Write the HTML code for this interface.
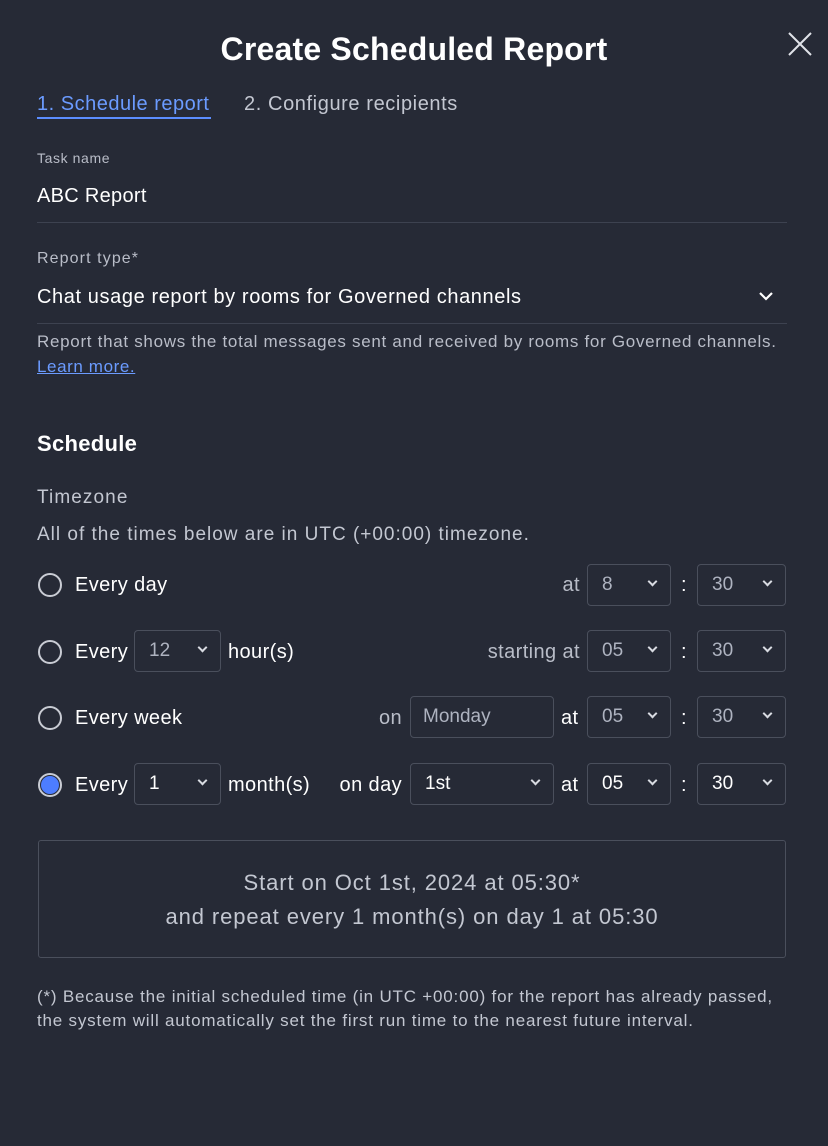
<!DOCTYPE html>
<html><head><style>
body{margin:0;width:828px;height:1146px;background:#262a36;font-family:"Liberation Sans",sans-serif;color:#fff;position:relative;overflow:hidden}
.a{position:absolute;white-space:nowrap}
.box{position:absolute;border:1px solid #4a4f5c;border-radius:4px;box-sizing:border-box;height:42px;font-size:19px;line-height:40px;padding-left:14px;color:#fff}
.box.dim{color:#aeb3c0}
.chev{position:absolute;right:14px;top:13px;border-right:2px solid #d8dbe2;border-bottom:2px solid #d8dbe2;transform:rotate(45deg);width:5px;height:5px}
.radio{position:absolute;width:24px;height:24px;border:2px solid #c9ccd4;border-radius:50%;box-sizing:border-box}
.lbl{font-size:20px;color:#fff;letter-spacing:0.4px}
.g{color:#b9bdc8}
.r{text-align:right}
</style></head><body>
<div class="a" style="left:0;width:828px;text-align:center;top:31px;font-size:32px;font-weight:bold;letter-spacing:0.2px">Create Scheduled Report</div>
<svg class="a" style="left:787px;top:31px" width="26" height="26"><path d="M2 2L24 24M24 2L2 24" stroke="#e0e2e8" stroke-width="2"/></svg>
<div class="a" style="left:37px;top:93px;font-size:20px;color:#6b9bff;letter-spacing:0.5px">1. Schedule report</div>
<div class="a" style="left:37px;top:117px;width:174px;height:2px;background:#5b8dff"></div>
<div class="a" style="left:244px;top:93px;font-size:20px;color:#c3c7d1;letter-spacing:0.6px">2. Configure recipients</div>
<div class="a" style="left:37px;top:150px;font-size:14px;color:#b9bdc8;letter-spacing:0.6px">Task name</div>
<div class="a" style="left:37px;top:185px;font-size:20px;letter-spacing:0.3px">ABC Report</div>
<div class="a" style="left:37px;top:222px;width:750px;height:1px;background:#3d4250"></div>
<div class="a" style="left:37px;top:250px;font-size:16px;color:#b9bdc8;letter-spacing:1.1px">Report type*</div>
<div class="a" style="left:37px;top:286px;font-size:20px;letter-spacing:0.6px">Chat usage report by rooms for Governed channels</div>
<svg class="a" style="left:757px;top:290px" width="18" height="12"><path d="M3 3L9 9L15 3" stroke="#fff" stroke-width="2.2" fill="none"/></svg>
<div class="a" style="left:37px;top:323px;width:750px;height:1px;background:#3d4250"></div>
<div class="a" style="left:37px;top:332px;font-size:17px;color:#b9bdc8;letter-spacing:0.7px">Report that shows the total messages sent and received by rooms for Governed channels.</div>
<div class="a" style="left:37px;top:357px;font-size:17px;color:#6b9bff;text-decoration:underline;letter-spacing:0.6px">Learn more.</div>
<div class="a" style="left:37px;top:431px;font-size:22px;font-weight:bold;letter-spacing:0.3px">Schedule</div>
<div class="a" style="left:37px;top:487px;font-size:19px;color:#c3c7d1;letter-spacing:1.1px">Timezone</div>
<div class="a" style="left:37px;top:524px;font-size:19px;color:#c3c7d1;letter-spacing:1px">All of the times below are in UTC (+00:00) timezone.</div>

<!-- row1 -->
<div class="radio" style="left:38px;top:573px"></div>
<div class="a lbl" style="left:75px;top:574px">Every day</div>
<div class="a lbl g r" style="right:248px;top:574px">at</div>
<div class="box dim" style="left:587px;top:564px;width:84px">8<span class="chev"></span></div>
<div class="a lbl" style="left:681px;top:574px">:</div>
<div class="box dim" style="left:697px;top:564px;width:89px">30<span class="chev"></span></div>
<!-- row2 -->
<div class="radio" style="left:38px;top:640px"></div>
<div class="a lbl" style="left:75px;top:641px">Every</div>
<div class="box dim" style="left:134px;top:630px;width:87px">12<span class="chev"></span></div>
<div class="a lbl" style="left:228px;top:641px">hour(s)</div>
<div class="a lbl g r" style="right:248px;top:641px">starting at</div>
<div class="box dim" style="left:587px;top:630px;width:84px">05<span class="chev"></span></div>
<div class="a lbl" style="left:681px;top:641px">:</div>
<div class="box dim" style="left:697px;top:630px;width:89px">30<span class="chev"></span></div>
<!-- row3 -->
<div class="radio" style="left:38px;top:706px"></div>
<div class="a lbl" style="left:75px;top:707px">Every week</div>
<div class="a lbl g r" style="right:426px;top:707px">on</div>
<div class="box dim" style="left:410px;top:696px;width:144px;padding-left:12px">Monday</div>
<div class="a lbl" style="left:561px;top:707px">at</div>
<div class="box dim" style="left:587px;top:696px;width:84px">05<span class="chev"></span></div>
<div class="a lbl" style="left:681px;top:707px">:</div>
<div class="box dim" style="left:697px;top:696px;width:89px">30<span class="chev"></span></div>
<!-- row4 -->
<div class="radio" style="left:38px;top:773px"><div style="position:absolute;left:1px;top:1px;width:18px;height:18px;border-radius:50%;background:#4d7dff"></div></div>
<div class="a lbl" style="left:75px;top:774px">Every</div>
<div class="box" style="left:134px;top:763px;width:87px">1<span class="chev"></span></div>
<div class="a lbl" style="left:228px;top:774px">month(s)</div>
<div class="a lbl r" style="right:426px;top:774px">on day</div>
<div class="box" style="left:410px;top:763px;width:144px">1st<span class="chev"></span></div>
<div class="a lbl" style="left:561px;top:774px">at</div>
<div class="box" style="left:587px;top:763px;width:84px">05<span class="chev"></span></div>
<div class="a lbl" style="left:681px;top:774px">:</div>
<div class="box" style="left:697px;top:763px;width:89px">30<span class="chev"></span></div>

<div class="a" style="left:38px;top:840px;width:748px;height:118px;border:1px solid #4a4f5c;border-radius:3px;box-sizing:border-box;text-align:center;font-size:22px;color:#c3c7d1;line-height:34px;padding-top:25px;letter-spacing:0.9px">Start on Oct 1st, 2024 at 05:30*<br>and repeat every 1 month(s) on day 1 at 05:30</div>
<div class="a" style="left:37px;top:985px;font-size:17px;color:#c3c7d1;line-height:24px;letter-spacing:0.8px">(*) Because the initial scheduled time (in UTC +00:00) for the report has already passed,<br>the system will automatically set the first run time to the nearest future interval.</div>
</body></html>
